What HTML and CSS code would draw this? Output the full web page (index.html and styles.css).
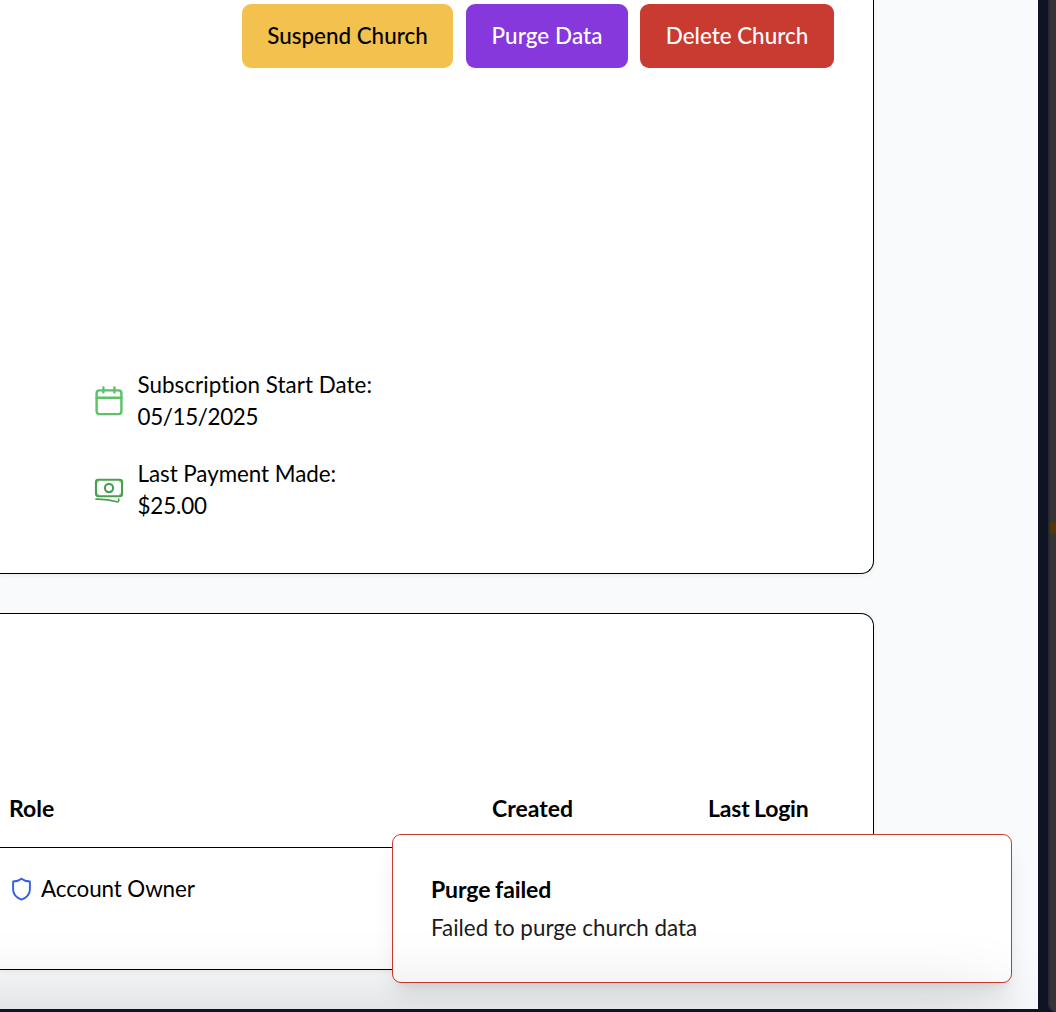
FILE: index.html
```html
<!DOCTYPE html>
<html lang="en">
<head>
<meta charset="utf-8">
<title>Church details</title>
<link rel="stylesheet" href="styles.css">
</head>
<body>
<div class="desktop">
  <div class="window">
    <main class="page">
      <section class="card details">
        <div class="actions">
          <button class="btn suspend">Suspend Church</button>
          <button class="btn purge">Purge Data</button>
          <button class="btn delete">Delete Church</button>
        </div>
        <div class="facts">
          <div class="fact">
            <svg class="icon calendar" viewBox="0 0 30 32" fill="none" stroke="currentColor" stroke-width="2.4" stroke-linecap="round" stroke-linejoin="round"><rect x="2.6" y="5.4" width="24.8" height="23.700" rx="2.8"/><path d="M2.6 12.8h24.8M9.4 2.400v5M20.400 2.400v5"/></svg>
            <div><p class="label">Subscription Start Date:</p><p class="date">05/15/2025</p></div>
          </div>
          <div class="fact">
            <svg class="icon cash" viewBox="0 0 30 32" fill="none" stroke="currentColor" stroke-width="2.1" stroke-linecap="round" stroke-linejoin="round"><rect x="2" y="5.8" width="26" height="16.4" rx="2.200"/><circle cx="15" cy="14" r="4.1"/><path stroke-width="1.7" d="M2 25.200c8.3-.2 15 .8 20.8 2.6 1.1.3 1.9-.3 1.9-1.4v-1.2"/><path stroke-width=".7" d="M3 8.300q1.600 0 1.600-1.500M27 8.300q-1.600 0-1.600-1.500M3 19.700q1.600 0 1.600 1.500M27 19.700q-1.600 0-1.600 1.500"/></svg>
            <div><p class="payment">Last Payment Made:</p><p class="amount">$25.00</p></div>
          </div>
        </div>
      </section>
      <section class="card members">
        <div class="row head">
          <div>Role</div><div>Created</div><div class="login">Last Login</div>
        </div>
        <div class="row member">
          <div class="role">
            <svg class="shield" viewBox="0 0 22 26" fill="none" stroke="currentColor" stroke-width="2" stroke-linejoin="round"><path d="M11 2.2C8.6 4.2 5.500 5 2.200 5.200V13.500c0 5.200 3.600 8.600 8.800 10.600 5.200-2 8.800-5.400 8.800-10.600V5.200C16.500 5 13.400 4.200 11 2.200Z"/></svg>
            <span>Account Owner</span>
          </div>
        </div>
      </section>
    </main>
    <div class="toast" role="alert">
      <strong>Purge failed</strong>
      <span>Failed to purge church data</span>
    </div>
    <div class="shade"></div>
  </div>
  <div class="backdrop"><div class="marker"></div></div>
</div>
</body>
</html>
```
FILE: styles.css
```css
* { box-sizing: border-box; }
body {
  margin: 0;
  background: #0e1424;
  color: #000;
  font: 22.4px/32px Lato, "Liberation Sans", sans-serif;
  font-variant-ligatures: none;
  overflow: hidden;
}
p { margin: 0; }
.desktop { display: flex; width: 1056px; height: 1012px; background: #0e1424; }
.window { position: relative; width: 1038px; height: 1009px; overflow: hidden; background: #f9fafc; }
.page { display: flex; flex-direction: column; gap: 39px; width: 874px; }
.card { background: #fff; border: 1px solid #000; border-left: 0; box-shadow: 0 2px 4px rgba(0, 0, 0, .05); }
.details { height: 574px; border-top: 0; border-radius: 0 0 13px 0; }
.actions { display: flex; justify-content: flex-end; gap: 12px; padding: 4px 39px 0 0; }
.btn {
  height: 64px;
  padding: 0;
  border: 0;
  border-radius: 9px;
  color: #fff;
  font: inherit;
  font-weight: 500;
}
.suspend { width: 211px; margin-right: 1px; background: #f2c14e; color: #000; }
.purge { width: 162px; background: #8638dd; letter-spacing: .1px; }
.delete { width: 194px; background: #c93a31; }
.facts { display: flex; flex-direction: column; gap: 25px; padding: 301px 0 0 94px; }
.fact { display: flex; align-items: center; gap: 13.5px; height: 64px; }
.label { letter-spacing: .05px; }
.payment { letter-spacing: -.05px; }
.date { letter-spacing: -.36px; }
.amount { letter-spacing: -.15px; }
.icon { width: 30px; height: 32px; }
.calendar { color: #5bc266; }
.cash { color: #479f50; }
.members { height: 357px; padding-top: 178px; border-top-right-radius: 13px; }
.row { display: grid; grid-template-columns: 483px 216px 1fr; padding-left: 9px; }
.head { height: 56px; border-bottom: 1px solid #000; font-size: 23px; font-weight: 700; }
.login { letter-spacing: -.2px; word-spacing: -.8px; }
.member { padding-top: 25px; }
.role { display: flex; align-items: center; gap: 9px; padding-left: 2px; letter-spacing: -.1px; }
.shield { width: 21px; height: 26px; color: #345fe1; }
.toast {
  position: absolute;
  left: 392px;
  top: 834px;
  display: flex;
  flex-direction: column;
  gap: 7px;
  width: 620px;
  height: 149px;
  padding: 38px;
  border: 1px solid #c93a31;
  border-radius: 9px;
  background: #fff;
  box-shadow: 0 16px 24px -5px rgba(0, 0, 0, .1), 0 6px 10px -6px rgba(0, 0, 0, .1);
}
.toast strong { font-size: 23px; letter-spacing: -.1px; word-spacing: -.8px; }
.toast span { color: #1c1c1c; }
.shade {
  position: absolute;
  left: -100px;
  right: 36px;
  bottom: -50px;
  height: 50px;
  box-shadow: 0 0 80px rgba(0, 0, 0, .2);
}
.backdrop { width: 8px; margin-left: auto; border-left: 2px solid #282a34; border-bottom-left-radius: 8px; background: #363535; }
.marker { width: 6px; height: 12px; margin-top: 522px; background: #4d390c; }
```
